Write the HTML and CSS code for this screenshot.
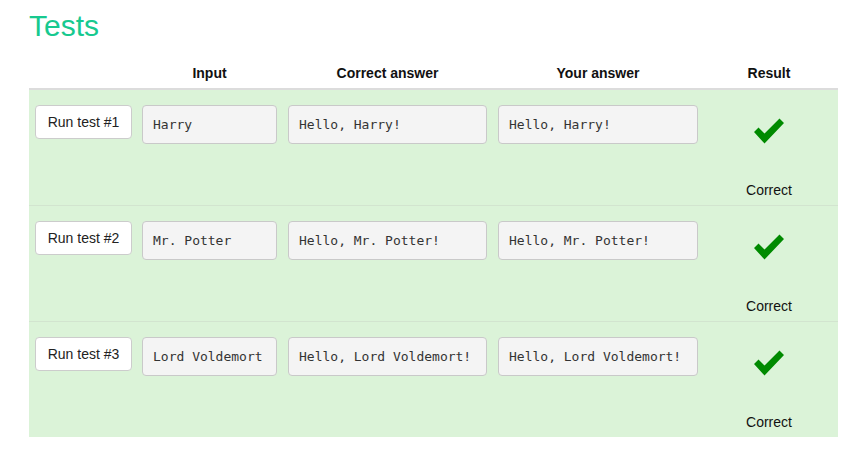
FILE: index.html
```html
<!DOCTYPE html>
<html>
<head>
<meta charset="utf-8">
<link rel="stylesheet" href="styles.css">
</head>
<body>
<div class="page">
  <h1 class="title">Tests</h1>
  <div class="table">
    <div class="grid head">
      <div></div>
      <div class="th">Input</div>
      <div class="th">Correct answer</div>
      <div class="th">Your answer</div>
      <div class="th">Result</div>
    </div>
    <div class="grid row">
      <div><button class="run">Run test #1</button></div>
      <div class="box">Harry</div>
      <div class="box">Hello, Harry!</div>
      <div class="box">Hello, Harry!</div>
      <div class="result">
        <svg class="check" viewBox="0 0 30 26" width="30" height="26"><polygon points="0,14 4.5,9.5 10.5,15.5 25.5,0.5 30,5 10.5,25.5" fill="#008a00"/></svg>
        <span class="res-text">Correct</span>
      </div>
    </div>
    <div class="grid row">
      <div><button class="run">Run test #2</button></div>
      <div class="box">Mr. Potter</div>
      <div class="box">Hello, Mr. Potter!</div>
      <div class="box">Hello, Mr. Potter!</div>
      <div class="result">
        <svg class="check" viewBox="0 0 30 26" width="30" height="26"><polygon points="0,14 4.5,9.5 10.5,15.5 25.5,0.5 30,5 10.5,25.5" fill="#008a00"/></svg>
        <span class="res-text">Correct</span>
      </div>
    </div>
    <div class="grid row last">
      <div><button class="run">Run test #3</button></div>
      <div class="box">Lord Voldemort</div>
      <div class="box">Hello, Lord Voldemort!</div>
      <div class="box">Hello, Lord Voldemort!</div>
      <div class="result">
        <svg class="check" viewBox="0 0 30 26" width="30" height="26"><polygon points="0,14 4.5,9.5 10.5,15.5 25.5,0.5 30,5 10.5,25.5" fill="#008a00"/></svg>
        <span class="res-text">Correct</span>
      </div>
    </div>
  </div>
</div>
</body>
</html>
```

FILE: styles.css
```css
* { box-sizing: border-box; }
html, body { margin: 0; padding: 0; background: #fff; }
body {
  font-family: "Liberation Sans", Arial, sans-serif;
  font-size: 14px;
  color: #111;
}
.page {
  padding: 9px 0 0 29px;
  width: 838px;
}
.title {
  margin: 0 0 15px 0;
  font-size: 30px;
  line-height: 34px;
  font-weight: normal;
  color: #17c98f;
}
.grid {
  display: grid;
  grid-template-columns: 96px 135px 199px 200px 1fr;
  column-gap: 11px;
  padding: 0 9px 0 6px;
}
.head {
  height: 32px;
  align-items: center;
  border-bottom: 2px solid #dcdcdc;
}
.th {
  font-weight: bold;
  text-align: center;
  line-height: 16px;
  color: #111;
}
.row {
  background: #dbf3d8;
  padding-top: 15px;
  padding-bottom: 7px;
  height: 116px;
  border-bottom: 1px solid #d2e4cf;
  align-items: start;
}
.row.last { border-bottom: none; height: 115px; }
.run {
  display: block;
  width: 97px;
  height: 34px;
  background: #fff;
  border: 1px solid #cccccc;
  border-radius: 4px;
  font-family: "Liberation Sans", Arial, sans-serif;
  font-size: 14px;
  color: #222;
  padding: 0 0 1px 0;
  margin: 0;
}
.box {
  height: 39px;
  display: flex;
  align-items: center;
  padding: 0 10px;
  background: #f4f4f4;
  border: 1px solid #c9c9c9;
  border-radius: 4px;
  font-family: "DejaVu Sans Mono", "Liberation Mono", monospace;
  font-size: 13px;
  color: #333;
  white-space: nowrap;
}
.result {
  display: flex;
  flex-direction: column;
  align-items: center;
}
.check {
  display: block;
  margin-top: 13px;
}
.res-text {
  display: block;
  margin-top: 38px;
  line-height: 16px;
  color: #111;
}
```
